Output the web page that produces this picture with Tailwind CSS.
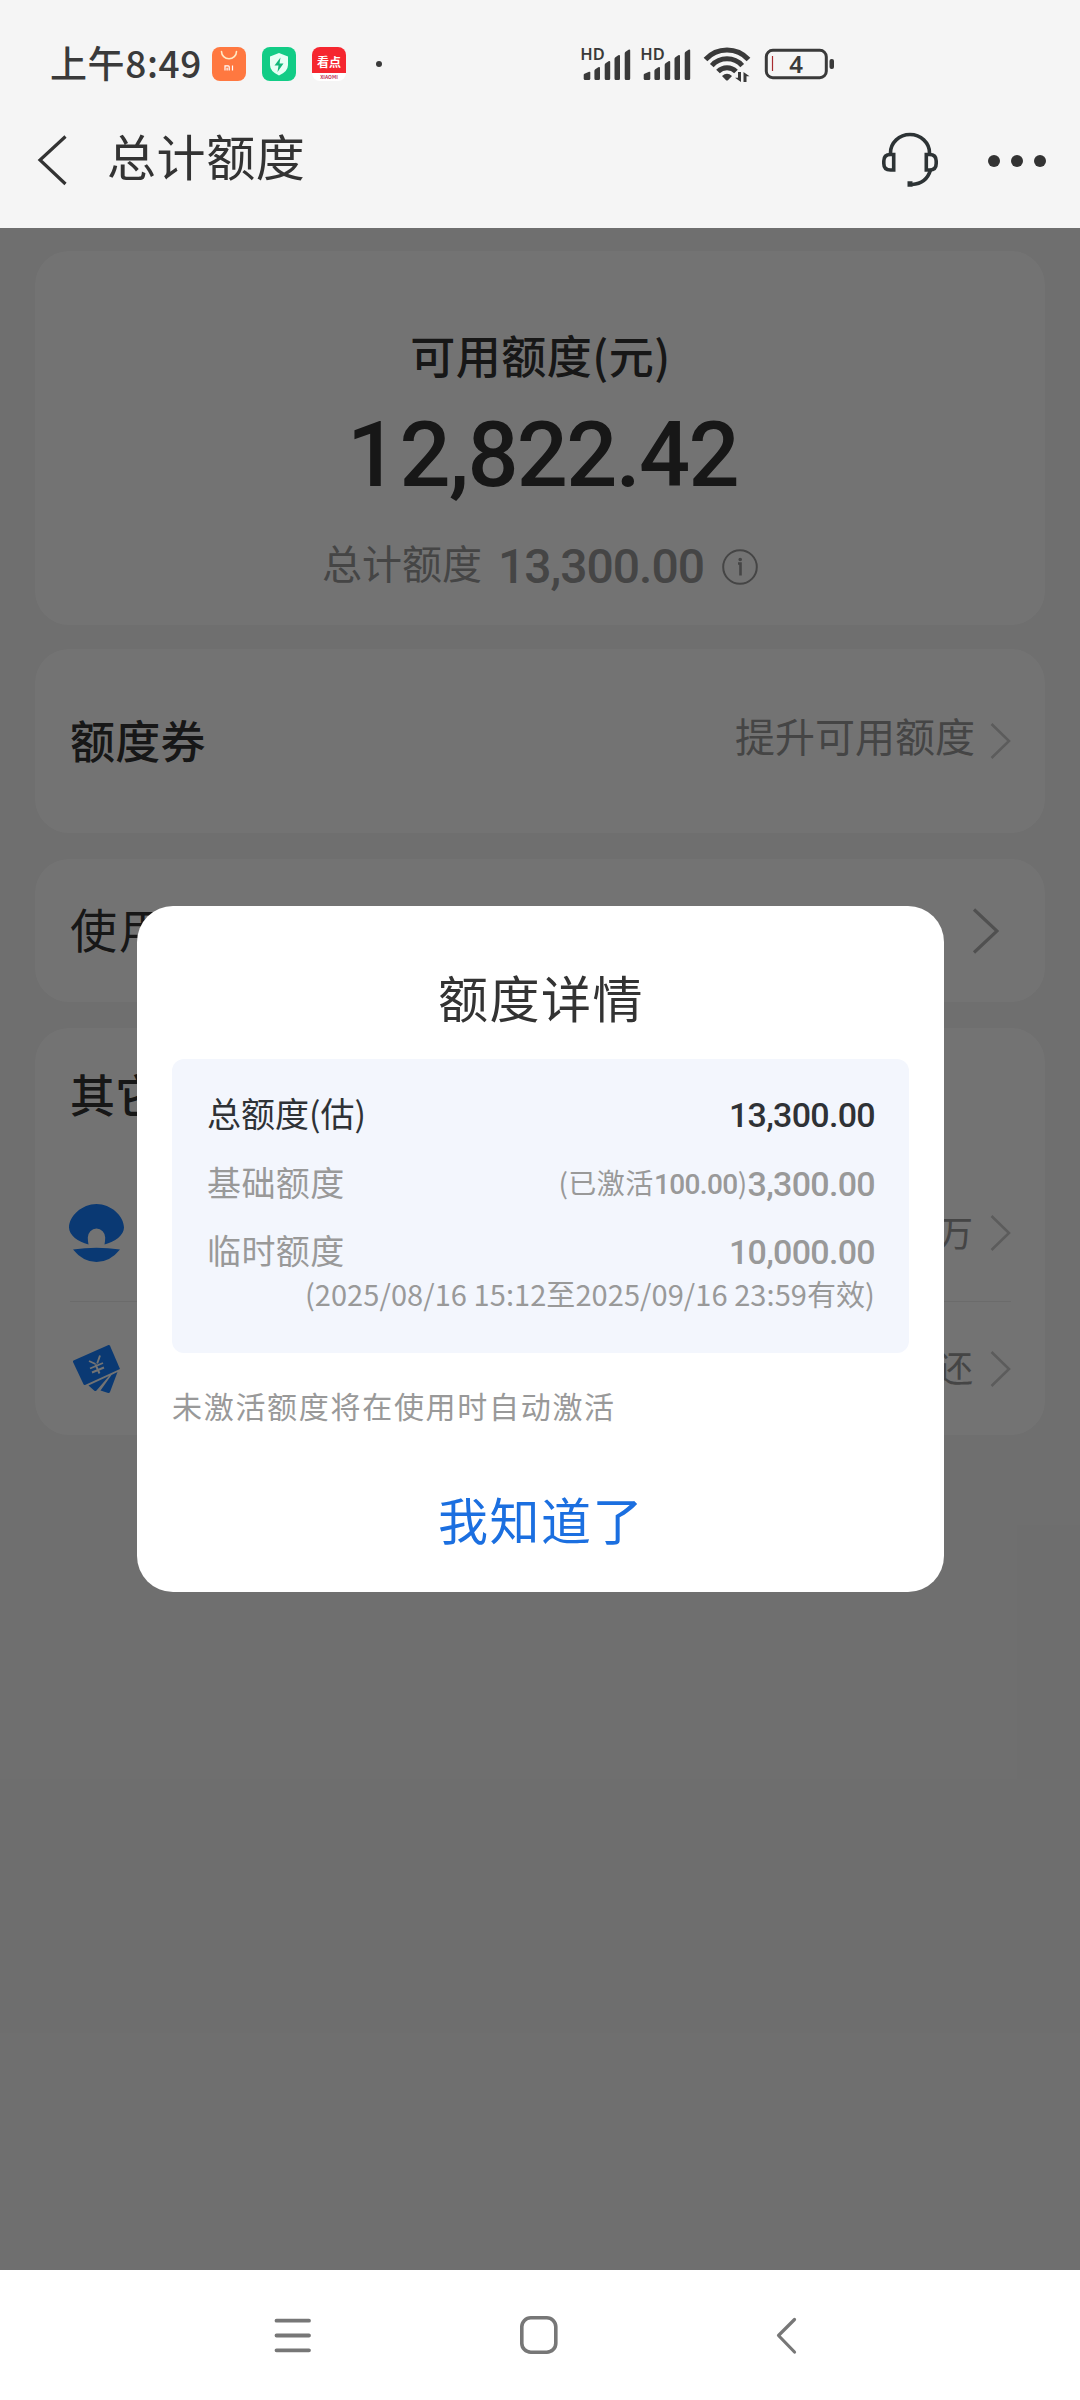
<!DOCTYPE html>
<html lang="zh-CN">
<head>
<meta charset="utf-8">
<title>总计额度</title>
<script src="https://cdn.jsdelivr.net/npm/@tailwindcss/browser@4"></script>
</head>
<body class="bg-[#f5f5f5]">
<div class="relative flex h-[2400px] w-[1080px] flex-col overflow-hidden bg-[#f5f5f5] font-['Noto_Sans_CJK_SC',sans-serif] text-[#333]">

  <!-- status bar -->
  <div class="flex h-[92px] items-center pt-9">
    <div class="flex w-[570px] items-center pl-[50px]">
      <div class="w-[162px] pb-1 text-[37px] leading-[48px] font-medium tracking-[0.600px] whitespace-nowrap text-[#3a3a3a]">上午8:49</div>
      <div class="flex items-center gap-4">
        <svg class="size-[34px]" viewBox="0 0 34 34"><rect width="34" height="34" rx="8" fill="#ff7840"/><path d="M9.500 4.500a7.500 7.200 0 0 0 15 0" fill="none" stroke="#ffe9c4" stroke-width="1.600" stroke-linecap="round"/><path d="M13 23.500v-4.700h3.200q1 0 1 1v3.700M15.100 20.800v2.700M20.500 18.500v5" fill="none" stroke="#fff" stroke-width="1.200"/></svg>
        <svg class="size-[34px]" viewBox="0 0 34 34"><rect width="34" height="34" rx="8" fill="#12cc86"/><path d="M17 6l9 3.500v8.500q0 6.500-9 10.500q-9-4-9-10.500v-8.500z" fill="#e6fff5"/><path d="M18.500 10.500l-6 8h4l-1 6.500l6-8.500h-4z" fill="#12b87a"/></svg>
        <div class="flex size-[34px] flex-col overflow-hidden rounded-lg bg-white">
          <div class="flex h-[26px] items-center justify-center bg-[#f5262f] pt-1 text-[12px] leading-none font-bold whitespace-nowrap text-white">看点</div>
          <div class="text-center text-[5px] leading-[7px] font-bold text-[#c0385a]">XIAOMI</div>
        </div>
      </div>
      <div class="ml-[30px] size-[6px] rounded-full bg-[#3a3a3a]"></div>
    </div>
    <svg class="h-[56px] w-[270px] overflow-visible" viewBox="570 36 270 56" fill="#3a3a3a">
      <text x="580.300" y="60.300" font-family="Noto Sans" font-weight="600" font-size="16.500" textLength="24.500" lengthAdjust="spacingAndGlyphs">HD</text>
      <text x="640.300" y="60.300" font-family="Noto Sans" font-weight="600" font-size="16.500" textLength="24.500" lengthAdjust="spacingAndGlyphs">HD</text>
      <g id="sig">
        <path d="M583.700 78.500v-3.500q0-.8.800-1.200l4.600-2q1.200-.3 1.200.8v5.900q0 1.500-1.500 1.500h-3.600q-1.500 0-1.500-1.500z"/>
        <path d="M594.400 78.500v-7.500q0-1.200.9-1.700l3-2q1.700-.8 1.700.8v10.400q0 1.500-1.400 1.500h-2.800q-1.400 0-1.400-1.500z"/>
        <path d="M604.700 78.500v-13.500q0-1.200.9-1.800l2.900-2q1.700-.8 1.700.8v16.500q0 1.500-1.400 1.500h-2.700q-1.400 0-1.400-1.500z"/>
        <path d="M614.500 78.500v-19.500q0-1.200.9-1.800l2.900-2q1.700-.8 1.700.8v22.500q0 1.500-1.400 1.500h-2.700q-1.400 0-1.400-1.500z"/>
        <path d="M624.700 78.500v-25q0-1.200.9-1.800l2.900-2q1.700-.8 1.700.8v28q0 1.500-1.400 1.500h-2.700q-1.400 0-1.400-1.500z"/>
      </g>
      <use href="#sig" x="60"/>
      <g fill="none" stroke="#3a3a3a" stroke-width="5">
        <path d="M705.500 59.500a29 29 0 0 1 43 0"/>
        <path d="M711.800 65.600a20.500 20.500 0 0 1 30.400 0"/>
        <path d="M718 71.600a12.500 12.500 0 0 1 18 0"/>
      </g>
      <path d="M722 76q5-4.500 10 0l-3.800 4q-1.200 1-2.400 0z"/>
      <path d="M741 72v10l-6-4.300h3v-5.700zM743.500 82v-10l6 4.300h-3v5.700z"/>
      <rect x="766.300" y="50.300" width="60" height="27.400" rx="6.500" fill="none" stroke="#3a3a3a" stroke-width="3"/>
      <rect x="829.500" y="59" width="4.500" height="10" rx="2"/>
      <path d="M772.500 56v15" stroke="#a82c30" stroke-width="1.200"/>
      <text x="796" y="73" text-anchor="middle" font-family="Noto Sans" font-weight="600" font-size="24">4</text>
    </svg>
  </div>

  <!-- title bar -->
  <div class="flex h-[136px] shrink-0 items-center">
    <svg class="ml-[36px] h-[52px] w-[32px] shrink-0" viewBox="36 134 32 52"><path d="M65.500 136.500L40 160l25.500 24" fill="none" stroke="#333" stroke-width="3.200"/></svg>
    <div class="ml-[39px] pb-[11px] text-[49px] leading-[60px] tracking-[0.600px] whitespace-nowrap">总计额度</div>
    <svg class="ml-auto h-[60px] w-[60px]" viewBox="880 131 60 60" fill="none" stroke="#2d3335" stroke-width="3.600">
      <path d="M890.500 155v-1a19.500 18.500 0 0 1 39 0v1"/>
      <path d="M893.700 155.500v15.500h-3.200q-6.700 0-6.700-6.500v-2.500q0-6.500 6.700-6.500z"/>
      <path d="M926.300 155.500v15.500h3.200q6.700 0 6.700-6.500v-2.500q0-6.500-6.700-6.500z"/>
      <path d="M930.500 171q-4 13.500-18.500 14.500" />
      <path d="M907.500 185h5" stroke-width="5.500"/>
    </svg>
    <div class="mr-[34px] ml-[48px] flex items-center gap-[11px] pt-[2px]">
      <div class="size-3 rounded-full bg-[#333]"></div><div class="size-3 rounded-full bg-[#333]"></div><div class="size-3 rounded-full bg-[#333]"></div>
    </div>
  </div>

  <!-- page under the dim layer -->
  <div class="relative h-[2042px] shrink-0">
    <div class="flex flex-col px-[35px] pt-[23px]">
      <section class="flex h-[374px] flex-col items-center rounded-[34px] bg-white pt-[74px]">
        <div class="pl-px text-[45px] leading-[60px] font-medium tracking-[0.500px]">可用额度(元)</div>
        <div class="mt-[21px] pl-[5px] font-[Roboto] text-[90px] leading-[100px] font-medium tracking-[-1.700px]">1<span class="ml-[3px]">2,822.42</span></div>
        <div class="mt-[34px] flex h-[50px] items-center text-[#999]">
          <span class="pb-[7px] text-[40px] leading-[50px]">总计额度</span>
          <span class="ml-4 pt-1 font-[Roboto] text-[48px] leading-[50px] font-medium tracking-[-1px]">13,300.00</span>
          <svg class="ml-[18px] mt-1 size-[36px]" viewBox="0 0 36 36" fill="none" stroke="#999"><circle cx="18" cy="18" r="16.800" stroke-width="2"/><path d="M16 14.500h2.500v12" stroke-width="2.600"/><circle cx="18.200" cy="10.500" r="1.200" stroke-width="1.200" fill="#999"/></svg>
        </div>
      </section>

      <section class="mt-6 flex h-[184px] items-center rounded-[34px] bg-white pr-[34px] pl-[35px]">
        <div class="pb-[3px] text-[45px] leading-[60px] font-medium tracking-[0.300px]">额度券</div>
        <div class="ml-auto pb-[13px] text-[40px] leading-[50px] text-[#999]">提升可用额度</div>
        <svg class="ml-[15px] h-[38px] w-[21px]" viewBox="0 0 21 38"><path d="M1.500 2L19 19L1.500 36" fill="none" stroke="#ccc" stroke-width="2.600"/></svg>
      </section>

      <section class="mt-[26px] flex h-[143px] items-center rounded-[34px] bg-white pr-[46px] pl-[35px]">
        <div class="pb-[6px] text-[47px] leading-[60px] tracking-[2px]">使用</div>
        <svg class="ml-auto h-[46px] w-[27px]" viewBox="0 0 27 46"><path d="M2 1.500L25 23L2 44.500" fill="none" stroke="#b2b2b2" stroke-width="3.200"/></svg>
      </section>

      <section class="mt-[26px] flex h-[407px] flex-col rounded-[34px] bg-white pr-[34px] pl-[35px] pt-[36px]">
        <div class="text-[45px] leading-[60px] font-medium">其它</div>
        <div class="mt-[41px] flex h-[136px] items-center">
          <svg class="-ml-[2px] h-[60px] w-[58px]" viewBox="68 1203 58 60" fill="#177fff">
            <path d="M88.500 1244.500C78 1242 69 1235 69 1227.500C69 1216 82 1204 96.500 1204S124 1216 124 1227.500C124 1235 115 1242 104.500 1244.500Q105.200 1241 105.200 1237.500A8.700 9 0 0 0 87.800 1237.500Q87.800 1241 88.500 1244.500z"/>
            <path d="M73 1249.500Q96.500 1246 120 1249.500Q110 1262 96.500 1262T73 1249.500z"/>
          </svg>
          <div class="ml-auto pb-[5px] text-[36px] leading-[50px] text-[#999]">万</div>
          <svg class="ml-[17px] h-[38px] w-[21px]" viewBox="0 0 21 38"><path d="M1.500 2L19 19L1.500 36" fill="none" stroke="#ccc" stroke-width="2.600"/></svg>
        </div>
        <div class="h-px bg-[#eee]"></div>
        <div class="flex h-[133px] items-center">
          <svg class="ml-[2px] h-[50px] w-[50px]" viewBox="72 1343 50 50" fill="#177fff">
            <path d="M73.500 1359.500L108.500 1344q1-.3 1.500.7L120 1368L85 1384q-1 .3-1.500-.7L73 1361q-.3-1 .5-1.500z"/>
            <path d="M88.500 1384.500L109 1375L96.500 1389.500q-1 1-2.100.2zM111.500 1374L117.500 1371L110 1391q-.5 1.300-1.800 1L100.500 1389.500z"/>
            <path d="M89 1360l6.500 3M100 1354.500l-2.800 8M90 1367.500l13-5.500M92 1371.500l12-5M95.500 1363.500l4 9" stroke="#fff" stroke-width="1.900" fill="none"/>
          </svg>
          <div class="ml-auto pb-[5px] text-[36px] leading-[50px] text-[#999]">还</div>
          <svg class="ml-[17px] h-[38px] w-[21px]" viewBox="0 0 21 38"><path d="M1.500 2L19 19L1.500 36" fill="none" stroke="#ccc" stroke-width="2.600"/></svg>
        </div>
      </section>
    </div>

    <!-- dim layer and dialog -->
    <div class="absolute inset-0 bg-black/55 pt-[678px] pl-[137px]">
      <div class="flex h-[686px] w-[807px] flex-col rounded-[36px] bg-white px-[35px] pt-[60px]">
        <div class="pl-px text-center text-[50px] leading-[60px] tracking-[1.500px]">额度详情</div>
        <div class="mt-[33px] h-[294px] rounded-xl bg-[#f3f6fd] pt-[19px] pr-[34px] pl-[35px] text-[34px] text-[#999]">
          <div class="flex h-[69px] items-center justify-between text-[#2f3236]">
            <span class="leading-[40px]">总额度(估)</span>
            <span class="pt-1 font-[Roboto] leading-[40px] font-medium tracking-[-0.700px]">13,300.00</span>
          </div>
          <div class="flex h-[69px] items-center">
            <span class="leading-[40px] tracking-[0.400px]">基础额度</span>
            <span class="ml-auto pt-[3px] text-[28px] leading-[40px] tracking-[0.500px]">(已激活<span class="font-[Roboto] font-medium tracking-[-0.600px]">100.00</span>)</span>
            <span class="pt-1 font-[Roboto] leading-[40px] font-medium tracking-[-0.700px]">3,300.00</span>
          </div>
          <div class="flex h-[57px] items-center justify-between pt-[11px]">
            <span class="leading-[40px] tracking-[0.400px]">临时额度</span>
            <span class="pt-1 font-[Roboto] leading-[40px] font-medium tracking-[-0.700px]">10,000.00</span>
          </div>
          <div class="text-right text-[29px] leading-[40px] tracking-[0.070px] whitespace-nowrap">(2025/08/16 15:12至2025/09/16 23:59有效)</div>
        </div>
        <div class="mt-8 text-[30px] leading-[40px] tracking-[1.700px] text-[#999]">未激活额度将在使用时自动激活</div>
        <div class="mt-[63px] pl-px text-center text-[50px] leading-[60px] tracking-[1.500px] text-[#1b6fe0]">我知道了</div>
      </div>
    </div>
  </div>

  <!-- system navigation -->
  <div class="flex h-[130px] shrink-0 items-center bg-white pl-[273px]">
    <svg class="h-[40px] w-[40px]" viewBox="0 0 40 40"><path d="M3.500 5.700h32.500M3.500 20.500h32.500M3.500 35.300h32.500" stroke="#777" stroke-width="3.800" stroke-linecap="round"/></svg>
    <svg class="ml-[206px] h-[40px] w-[40px]" viewBox="0 0 40 40"><rect x="2.800" y="2.800" width="34" height="34.400" rx="9" fill="none" stroke="#777" stroke-width="3.600"/></svg>
    <svg class="ml-[216px] h-[40px] w-[23px]" viewBox="0 0 23 40"><path d="M19.500 4.500L3.500 20.500l16 16.500" fill="none" stroke="#777" stroke-width="3.200" stroke-linecap="round" stroke-linejoin="round"/></svg>
  </div>
</div>
</body>
</html>
